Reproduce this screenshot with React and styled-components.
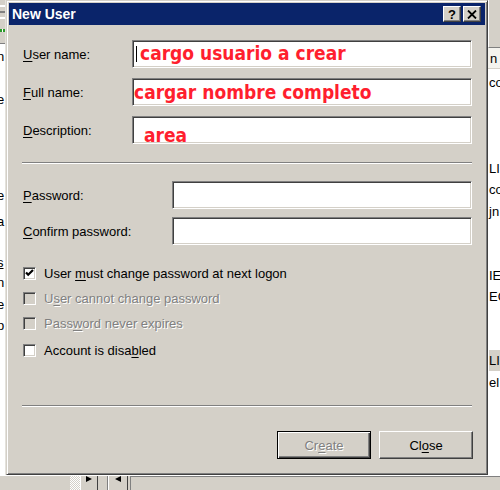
import React from "react";
import styled, { createGlobalStyle } from "styled-components";

const GlobalStyle = createGlobalStyle`
  html, body {
    margin: 0;
    padding: 0;
    background: #fff;
  }
  body {
    font-family: "Liberation Sans", Arial, sans-serif;
    font-size: 13px;
    color: #000;
  }
`;

const Screen = styled.div`
  width: 500px;
  height: 490px;
  overflow: hidden;
  display: grid;
  grid-template-columns: 6px 482px 12px;
  grid-template-rows: 475px 15px;
`;

/* background window, left slice */
const LeftStrip = styled.div`
  grid-column: 1;
  grid-row: 1;
  display: flex;
  flex-direction: column;
  overflow: hidden;
  border-right: 1px solid #e4e2dc;
`;

const ToolArea = styled.div`
  flex: none;
  height: 44px;
  background: #d4d0c8;
  display: flex;
  flex-direction: column;
  gap: 4px;
  padding-top: 5px;
  box-sizing: border-box;
  border-bottom: 1px solid #808080;
`;

const ToolLine = styled.div`
  height: 2px;
  background: ${(p) => p.$color || "#808080"};
`;

const GreenMark = styled.div`
  height: 3px;
  margin-top: 6px;
  background: repeating-linear-gradient(90deg, #2a9a2a 0 2px, #fff 2px 3px);
`;

const FragRow = styled.div`
  flex: none;
  height: ${(p) => p.$h}px;
  display: flex;
  align-items: center;
  white-space: nowrap;
  font-size: 13px;
  background: ${(p) => (p.$selected ? "#d4d0c8" : "transparent")};
`;

const LeftFrag = styled.span`
  margin-left: -3px;
  text-decoration: ${(p) => (p.$u ? "underline" : "none")};
`;

/* background window, right slice */
const RightStrip = styled.div`
  grid-column: 3;
  grid-row: 1;
  display: flex;
  flex-direction: column;
  overflow: hidden;
  background: #fff;
`;

const RightTop = styled.div`
  flex: none;
  height: 47px;
  background: #d4d0c8;
  border-left: 1px solid #fff;
  border-bottom: 1px solid #808080;
`;

const RightHeader = styled.div`
  flex: none;
  height: 20px;
  display: flex;
  align-items: center;
  padding-left: 2px;
  background: #f4f3ee;
  border-bottom: 1px solid #d4d0c8;
  font-size: 13px;
`;

const RightList = styled.div`
  display: flex;
  flex-direction: column;
  padding-left: 1px;
  padding-top: 3px;
`;

/* bottom of the background window */
const BottomStrip = styled.div`
  grid-column: 1 / -1;
  grid-row: 2;
  background: #d4d0c8;
  display: flex;
  align-items: stretch;
  padding-left: 70px;
  border-top: 1px solid #fff;
`;

const Track = styled.div`
  width: 10px;
  background: repeating-conic-gradient(#fff 0 25%, #d4d0c8 0 50%) 0 0 / 2px 2px;
`;

const ScrollBtn = styled.div`
  width: ${(p) => p.$w}px;
  box-sizing: border-box;
  border-left: 1px solid #fff;
  border-right: 1px solid #404040;
  display: flex;
  justify-content: center;
  align-items: flex-start;
`;

const ScrollGap = styled.div`
  width: 9px;
  border-right: 1px solid #808080;
`;

const StatusBox = styled.div`
  flex: 1;
  margin-left: 2px;
  border-left: 1px solid #808080;
  border-top: 1px solid #808080;
`;

/* dialog */
const Dialog = styled.div`
  grid-column: 2;
  grid-row: 1;
  box-sizing: border-box;
  display: flex;
  flex-direction: column;
  background: #d4d0c8;
  border: 1px solid;
  border-color: #d4d0c8 #404040 #404040 #d4d0c8;
  box-shadow: inset 1px 1px #fff, inset -1px -1px #808080;
  padding: 2px;
`;

const TitleBar = styled.div`
  flex: none;
  height: 22px;
  display: flex;
  align-items: center;
  background: #0a246a;
  padding: 0 4px 0 3px;
`;

const Title = styled.span`
  flex: 1;
  color: #fff;
  font-weight: bold;
  font-size: 14px;
`;

const CaptionButtons = styled.div`
  display: flex;
  gap: 2px;
`;

const CaptionButton = styled.div`
  box-sizing: border-box;
  width: 18px;
  height: 16px;
  background: #d4d0c8;
  border: 1px solid;
  border-color: #fff #404040 #404040 #fff;
  box-shadow: inset -1px -1px #808080;
  display: flex;
  align-items: center;
  justify-content: center;
  font-weight: bold;
  font-size: 13px;
  line-height: 1;
`;

const Body = styled.div`
  flex: 1;
  display: flex;
  flex-direction: column;
  padding: 15px 13px 13px 13px;
`;

const FieldGroup = styled.div`
  display: flex;
  flex-direction: column;
  gap: ${(p) => p.$gap}px;
  margin-top: ${(p) => p.$top || 0}px;
`;

const Row = styled.div`
  height: 28px;
  display: grid;
  grid-template-columns: ${(p) => p.$labelWidth}px 1fr;
  align-items: center;
`;

const Label = styled.span`
  padding-left: 1px;
  white-space: nowrap;
`;

const Key = styled.span`
  text-decoration: underline;
  text-underline-offset: 2px;
`;

const Field = styled.div`
  box-sizing: border-box;
  height: 28px;
  background: #fff;
  border: 1px solid;
  border-color: #808080 #fff #fff #808080;
  box-shadow: inset 1px 1px #404040, inset -1px -1px #d4d0c8;
  display: flex;
  align-items: flex-start;
  padding: ${(p) => p.$top || 0}px 0 0 ${(p) => p.$left || 0}px;
  overflow: hidden;
`;

const Caret = styled.span`
  flex: none;
  width: 1px;
  height: 16px;
  margin-top: 4px;
  margin-right: 3px;
  background: #000;
`;

const RedText = styled.span`
  font-family: "DejaVu Sans Condensed", "DejaVu Sans", sans-serif;
  font-stretch: condensed;
  font-weight: bold;
  font-size: 19px;
  line-height: 22px;
  color: #ff1f2e;
  white-space: nowrap;
`;

const Separator = styled.div`
  flex: none;
  border-top: 1px solid #808080;
  border-bottom: 1px solid #fff;
  margin-top: ${(p) => p.$top || 0}px;
`;

const CheckList = styled.div`
  display: flex;
  flex-direction: column;
  margin-top: 16px;
`;

const CheckRow = styled.div`
  height: 25px;
  display: flex;
  align-items: center;
  gap: 8px;
  padding-left: 1px;
  margin-top: ${(p) => p.$top || 0}px;
`;

const Box = styled.span`
  flex: none;
  box-sizing: border-box;
  width: 13px;
  height: 13px;
  background: ${(p) => (p.$disabled ? "#d4d0c8" : "#fff")};
  border: 1px solid;
  border-color: #808080 #fff #fff #808080;
  box-shadow: inset 1px 1px #404040, inset -1px -1px #d4d0c8;
  display: flex;
`;

const CheckLabel = styled.span`
  white-space: nowrap;
  color: ${(p) => (p.$disabled ? "#808080" : "#000")};
  text-shadow: ${(p) => (p.$disabled ? "1px 1px #fff" : "none")};
`;

const Footer = styled.div`
  margin-top: auto;
  display: flex;
  flex-direction: column;
`;

const ButtonRow = styled.div`
  display: flex;
  justify-content: flex-end;
  gap: 8px;
  margin-top: 24px;
  margin-right: -1px;
`;

const Button = styled.div`
  box-sizing: border-box;
  width: 94px;
  height: 28px;
  display: flex;
  align-items: center;
  justify-content: center;
  background: #d4d0c8;
  border: 1px solid;
  border-color: ${(p) =>
    p.$default ? "#000" : "#fff #404040 #404040 #fff"};
  box-shadow: ${(p) =>
    p.$default
      ? "inset 1px 1px #fff, inset -1px -1px #404040, inset -2px -2px #808080"
      : "inset -1px -1px #808080, inset 1px 1px #d4d0c8"};
  color: ${(p) => (p.$disabled ? "#808080" : "#000")};
  text-shadow: ${(p) => (p.$disabled ? "1px 1px #fff" : "none")};
`;

const CheckMark = () => (
  <svg width="11" height="11" viewBox="0 0 11 11">
    <path d="M2 4.5 L4.2 6.8 L9 2" fill="none" stroke="#000" strokeWidth="2.2" />
  </svg>
);

const CloseGlyph = () => (
  <svg width="10" height="9" viewBox="0 0 10 9">
    <path d="M1 0.5 L9 8.5 M9 0.5 L1 8.5" stroke="#000" strokeWidth="1.8" />
  </svg>
);

const Arrow = ({ dir }) => (
  <svg width="6" height="6" viewBox="0 0 6 6">
    <path d={dir === "right" ? "M0 0 L6 3 L0 6 Z" : "M6 0 L0 3 L6 6 Z"} fill="#000" />
  </svg>
);

const leftFrags = [
  { h: 2 },
  { h: 21, t: "n" },
  { h: 22 },
  { h: 21, t: "e" },
  { h: 21 },
  { h: 21, t: "i" },
  { h: 29 },
  { h: 29, t: "e" },
  { h: 22, t: "a" },
  { h: 20 },
  { h: 20, t: "s", u: true },
  { h: 21, t: "n" },
  { h: 22, t: "e" },
  { h: 20, t: "p" },
];

const rightFrags = ["co", "", "", "", "LI", "co", "jn", "", "", "IE", "EC", "", "", "LI", "el"];

const checks = [
  { label: <>User <Key>m</Key>ust change password at next logon</>, checked: true },
  { label: <>U<Key>s</Key>er cannot change password</>, disabled: true },
  { label: <>Pass<Key>w</Key>ord never expires</>, disabled: true },
  { label: <>Account is disa<Key>b</Key>led</>, top: 2 },
];

const App = () => {
  return (
    <Screen>
      <GlobalStyle />

      <LeftStrip>
        <ToolArea>
          <ToolLine $color="#fff" />
          <ToolLine />
          <ToolLine $color="#fff" />
          <GreenMark />
        </ToolArea>
        {leftFrags.map((f, i) => (
          <FragRow key={i} $h={f.h}>
            {f.t && <LeftFrag $u={f.u}>{f.t}</LeftFrag>}
          </FragRow>
        ))}
      </LeftStrip>

      <Dialog>
        <TitleBar>
          <Title>New User</Title>
          <CaptionButtons>
            <CaptionButton>?</CaptionButton>
            <CaptionButton>
              <CloseGlyph />
            </CaptionButton>
          </CaptionButtons>
        </TitleBar>

        <Body>
          <FieldGroup $gap={10}>
            <Row $labelWidth={110}>
              <Label><Key>U</Key>ser name:</Label>
              <Field $left={3} $top={1}>
                <Caret />
                <RedText>cargo usuario a crear</RedText>
              </Field>
            </Row>
            <Row $labelWidth={110}>
              <Label><Key>F</Key>ull name:</Label>
              <Field $left={1} $top={2}>
                <RedText>cargar nombre completo</RedText>
              </Field>
            </Row>
            <Row $labelWidth={110}>
              <Label><Key>D</Key>escription:</Label>
              <Field $left={11} $top={7}>
                <RedText>area</RedText>
              </Field>
            </Row>
          </FieldGroup>

          <Separator $top={18} />

          <FieldGroup $gap={8} $top={17}>
            <Row $labelWidth={150}>
              <Label><Key>P</Key>assword:</Label>
              <Field />
            </Row>
            <Row $labelWidth={150}>
              <Label><Key>C</Key>onfirm password:</Label>
              <Field />
            </Row>
          </FieldGroup>

          <CheckList>
            {checks.map((c, i) => (
              <CheckRow key={i} $top={c.top}>
                <Box $disabled={c.disabled}>{c.checked && <CheckMark />}</Box>
                <CheckLabel $disabled={c.disabled}>{c.label}</CheckLabel>
              </CheckRow>
            ))}
          </CheckList>

          <Footer>
            <Separator />
            <ButtonRow>
              <Button $default $disabled>
                Cr<Key>e</Key>ate
              </Button>
              <Button>
                Cl<Key>o</Key>se
              </Button>
            </ButtonRow>
          </Footer>
        </Body>
      </Dialog>

      <RightStrip>
        <RightTop />
        <RightHeader>n</RightHeader>
        <RightList>
          {rightFrags.map((t, i) => (
            <FragRow key={i} $h={21.4} $selected={i === 13}>
              {t}
            </FragRow>
          ))}
        </RightList>
      </RightStrip>

      <BottomStrip>
        <Track />
        <ScrollBtn $w={18}>
          <Arrow dir="right" />
        </ScrollBtn>
        <ScrollGap />
        <ScrollBtn $w={20}>
          <Arrow dir="left" />
        </ScrollBtn>
        <StatusBox />
      </BottomStrip>
    </Screen>
  );
};

export default App;
